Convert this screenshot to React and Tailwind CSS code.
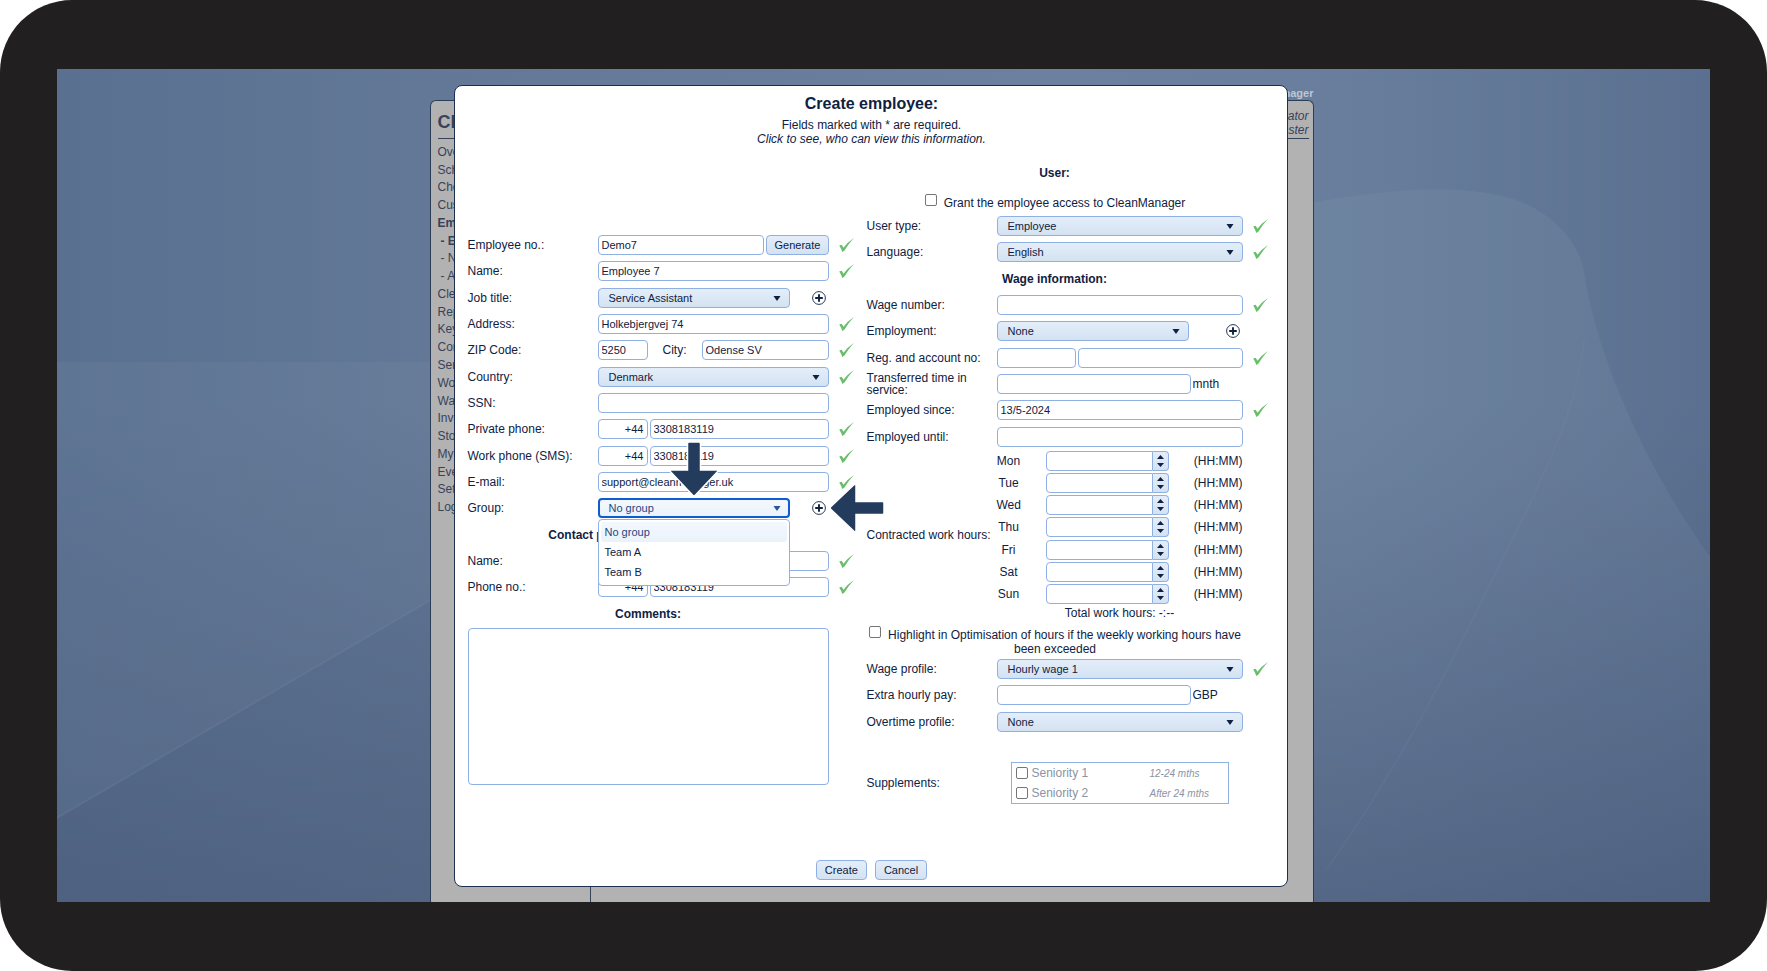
import { useState } from 'react'

const menuItems = [
  'Overview', 'Schedule', 'Checklists', 'Customers', 'Employees', '- Employees', '- New', '- Absence',
  'Cleaning', 'Reports', 'Keys', 'Contacts', 'Services', 'Work', 'Warehouse', 'Invoices', 'Stock',
  'My page', 'Events', 'Settings', 'Log out',
]
const days = ['Mon', 'Tue', 'Wed', 'Thu', 'Fri', 'Sat', 'Sun']
const groups = ['No group', 'Team A', 'Team B']

const box = 'h-5 rounded-[4px] border border-[#8fb0e2] text-[11px] text-[#0f2142]'
const blue = 'bg-linear-to-b from-[#e4eef9] to-[#d3e2f2]'

function Check() {
  return (
    <svg viewBox="0 0 15 14" className="h-[14px] w-[15px]" aria-hidden="true">
      <path
        d="M0.2 7.5 L2.7 6.7 L4.5 9.8 Q8.5 4.2 14.9 0 Q9.6 5.6 5.5 12.6 L3.3 14 Q2.3 10.700 0.2 7.5 Z"
        fill="#69be6b"
      />
    </svg>
  )
}

function Plus({ label }) {
  return (
    <button type="button" aria-label={label} className="mr-[3px] ml-auto">
      <svg viewBox="0 0 14 14" className="size-[14px]" fill="none" stroke="#0f2142">
        <circle cx="7" cy="7" r="6.4" strokeWidth="0.9" />
        <path d="M7 3.2v7.6M3.2 7h7.6" strokeWidth="1.900" />
      </svg>
    </button>
  )
}

function Input({ className = 'w-full', ...props }) {
  return <input type="text" className={`${box} min-w-0 bg-white px-[3px] outline-none ${className}`} {...props} />
}

function Select({ id, value, className = 'w-full', active, options = [value] }) {
  return (
    <div className={`relative flex ${className}`}>
      <select
        id={id}
        defaultValue={value}
        className={
          active
            ? 'h-5 w-full appearance-none rounded-[4px] border-2 border-[#0f5bd0] bg-linear-to-b from-[#f4f8fd] to-[#eaf2fb] pl-[9px] text-[11px] text-[#24477f] outline-none'
            : `${box} ${blue} w-full appearance-none pl-[10px] outline-none`
        }
      >
        {options.map(o => <option key={o}>{o}</option>)}
      </select>
      <svg viewBox="0 0 8 5" className="pointer-events-none absolute top-2 right-[9px] h-[5px] w-2" aria-hidden="true">
        <path d="M0.5 0h7L4.6 4.3q-.6.7-1.2 0z" fill={active ? '#2f5597' : '#0f2142'} />
      </svg>
    </div>
  )
}

function Row({ id, label, ok, children }) {
  return (
    <div className="flex items-center">
      <label htmlFor={id} className="w-[130px] shrink-0 pr-2 leading-3">{label}</label>
      <div className="relative flex min-w-0 flex-1 items-center gap-[2px]">{children}</div>
      <div className="w-[26px] shrink-0 pl-[10px]">{ok && <Check />}</div>
    </div>
  )
}

function Heading({ children }) {
  return <h2 className="self-center pr-[26px] text-center font-bold">{children}</h2>
}

function Button({ children, className = '' }) {
  return (
    <button type="button" className={`${box} ${blue} px-2 ${className}`}>
      {children}
    </button>
  )
}

function Wallpaper() {
  return (
    <svg viewBox="0 0 1653 833" preserveAspectRatio="none" className="absolute inset-0 size-full" aria-hidden="true">
      <defs>
        <linearGradient id="sky" x1="0" x2="1" y1="0" y2="0">
          <stop offset="0" stopColor="#5a7091" />
          <stop offset=".22" stopColor="#627896" />
          <stop offset=".6" stopColor="#6b819f" />
          <stop offset=".78" stopColor="#687e9c" />
          <stop offset="1" stopColor="#5b7090" />
        </linearGradient>
        <linearGradient id="shade" x1="0" x2="0" y1="0" y2="1">
          <stop offset=".4" stopColor="#465776" stopOpacity="0" />
          <stop offset="1" stopColor="#465776" stopOpacity=".6" />
        </linearGradient>
        <linearGradient id="glow" x1="0" x2="0" y1="0" y2="1">
          <stop offset="0" stopColor="#869db0" stopOpacity=".16" />
          <stop offset=".4" stopColor="#869db0" stopOpacity=".16" />
          <stop offset="1" stopColor="#869db0" stopOpacity="0" />
        </linearGradient>
      </defs>
      <rect width="1653" height="833" fill="url(#sky)" />
      <rect width="1653" height="833" fill="url(#shade)" />
      <path d="M0 293 H420 V504 L0 749 Z" fill="#7d94a8" fillOpacity=".14" />
      <path d="M0 749 L420 504" fill="none" stroke="#8ba0b8" strokeOpacity=".14" strokeWidth="2" />
      <path d="M1200 145 Q1376 105 1456 130 C1500 145 1522 176 1527 203 C1540 290 1590 400 1653 488 V833 H1200 Z" fill="url(#glow)" />
      <path d="M1527 270 C1520 350 1480 420 1413 556 C1380 620 1340 700 1270 800" fill="none" stroke="#8ba0b8" strokeOpacity=".09" strokeWidth="2" />
    </svg>
  )
}

function Background() {
  return (
    <div className="relative mx-auto flex h-full w-full max-w-[884px] flex-col text-[12px] text-[#36425a]">
      <p className="flex h-[31px] items-end justify-end text-[11px] leading-[14px] font-bold text-[#bfc6d0]">CleanManager</p>
      <div className="flex flex-1 flex-col rounded-t-[6px] border border-b-0 border-[#2c3d57] bg-[#b2b2b2] pr-1 pl-[7px]">
        <header className="flex h-[38px] items-center justify-between border-b border-[#36425a] pt-[6px]">
          <span className="text-[18px] font-bold">CleanManager</span>
          <span className="text-right leading-[14px] italic">Administrator<br />Cleanmaster</span>
        </header>
        <nav className="w-[153px] flex-1 border-r border-[#36425a] pt-1 leading-4">
          <ul className="grid min-h-[373px] auto-rows-fr">
            {menuItems.map((item, i) => (
              <li key={item} className={`flex items-center ${i === 4 || i === 5 ? 'font-bold' : ''}`}>
                <a href="#" className={item.startsWith('-') ? 'pl-[3px]' : ''}>{item}</a>
              </li>
            ))}
          </ul>
        </nav>
      </div>
    </div>
  )
}

function GroupField() {
  const [selected, setSelected] = useState('No group')
  return (
    <>
      <Select id="group" value="No group" options={groups} className="w-[192px]" active />
      <Plus label="Add group" />
      <ul className="absolute top-[21px] left-0 z-10 w-[192px] rounded-[4px] border border-[#8fb0e2] bg-white px-[2px] pt-[2px] pb-[3px]">
        {groups.map(g => (
          <li key={g}>
            <button
              type="button"
              onClick={() => setSelected(g)}
              className={`h-5 w-full rounded-[3px] px-1 text-left text-[11px] ${g === selected ? 'bg-linear-to-b from-[#f3f8fd] to-[#eaf2fb] text-[#24477f]' : ''}`}
            >
              {g}
            </button>
          </li>
        ))}
      </ul>
      <svg viewBox="0 0 52 58" className="absolute bottom-5 left-[70px] z-20 h-[58px] w-[52px]" aria-hidden="true">
        <path
          d="M21 2h10q1.500 0 1.500 1.500V30h15.500q3 0 1 2.300L27.500 55q-1.500 1.700-3 0L3 32.300Q1 30 4 30H19.500V3.500Q19.500 2 21 2Z"
          fill="#233b5c" stroke="#fff" strokeWidth="1.500"
        />
      </svg>
      <svg viewBox="0 0 58 52" className="absolute -right-[57px] z-20 h-[52px] w-[58px]" aria-hidden="true">
        <path
          d="M56 21v10q0 1.500-1.500 1.500H28v15.500q0 3-2.300 1L3 27.500q-1.700-1.500 0-3L25.700 3Q28 1 28 4V19.500H54.500Q56 19.500 56 21Z"
          fill="#233b5c" stroke="#fff" strokeWidth="1.500"
        />
      </svg>
    </>
  )
}

function Phone({ id, label }) {
  return (
    <Row id={id} label={label} ok>
      <Input className="w-[50px] text-right" defaultValue="+44" aria-label={`${label} country code`} />
      <Input id={id} className="flex-1" defaultValue="3308183119" />
    </Row>
  )
}

function EmployeeColumn() {
  return (
    <section className="flex-[387] pt-[86px]">
      <div className="grid min-h-[395px] auto-rows-fr">
        <Row id="no" label="Employee no.:" ok>
          <Input id="no" className="flex-1" defaultValue="Demo7" />
          <Button className="w-[63px]">Generate</Button>
        </Row>
        <Row id="name" label="Name:" ok><Input id="name" defaultValue="Employee 7" /></Row>
        <Row id="job" label="Job title:">
          <Select id="job" value="Service Assistant" className="w-[192px]" />
          <Plus label="Add job title" />
        </Row>
        <Row id="address" label="Address:" ok><Input id="address" defaultValue="Holkebjergvej 74" /></Row>
        <Row id="zip" label="ZIP Code:" ok>
          <Input id="zip" className="w-[50px]" defaultValue="5250" />
          <label htmlFor="city" className="flex-1 text-center">City:</label>
          <Input id="city" className="w-[127px]" defaultValue="Odense SV" />
        </Row>
        <Row id="country" label="Country:" ok><Select id="country" value="Denmark" /></Row>
        <Row id="ssn" label="SSN:"><Input id="ssn" /></Row>
        <Phone id="private" label="Private phone:" />
        <Phone id="work" label="Work phone (SMS):" />
        <Row id="email" label="E-mail:" ok><Input id="email" defaultValue="support@cleanmanager.uk" /></Row>
        <Row id="group" label="Group:"><GroupField /></Row>
        <Heading>Contact person during emergency:</Heading>
        <Row id="contact" label="Name:" ok><Input id="contact" /></Row>
        <Phone id="contact-phone" label="Phone no.:" />
        <Heading>Comments:</Heading>
      </div>
      <div className="pr-[26px]">
        <textarea aria-label="Comments" className="mt-px block h-[157px] w-full resize-none rounded-[4px] border border-[#8fb0e2] bg-white outline-none" />
      </div>
    </section>
  )
}

function TimeInput({ id }) {
  return (
    <div className="flex">
      <Input id={id} className="w-[107px] rounded-r-none" />
      <div className={`${box} ${blue} flex w-[16px] flex-col items-center justify-center gap-1 rounded-l-none border-l-0`}>
        <button type="button" aria-label="Increase">
          <svg viewBox="0 0 7 4" className="h-1 w-[7px]"><path d="M0 4L3.500 0L7 4Z" fill="#0f2142" /></svg>
        </button>
        <button type="button" aria-label="Decrease">
          <svg viewBox="0 0 7 4" className="h-1 w-[7px]"><path d="M0 0L3.500 4L7 0Z" fill="#0f2142" /></svg>
        </button>
      </div>
    </div>
  )
}

function CheckLine({ children }) {
  return (
    <label className="block pr-[25px] text-center leading-[14px]">
      <input type="checkbox" className="mr-[7px] size-3 appearance-none rounded-[2px] border border-[#767676] bg-white align-[1px]" />
      {children}
    </label>
  )
}

function Supplement({ name, period }) {
  return (
    <label className="flex h-5 items-center text-[#8b93a3]">
      <input type="checkbox" className="mr-1 size-3 appearance-none rounded-[2px] border border-[#767676] bg-white" />
      <span className="w-[118px]">{name}</span>
      <span className="text-[10px] italic">{period}</span>
    </label>
  )
}

function WageColumn() {
  return (
    <section className="flex-[402] pt-[14px]">
      <div className="grid h-[26px]"><Heading>User:</Heading></div>
      <div className="h-[27px] pt-2">
        <CheckLine>Grant the employee access to CleanManager</CheckLine>
      </div>
      <div className="grid min-h-[237px] auto-rows-fr">
        <Row id="type" label="User type:" ok><Select id="type" value="Employee" /></Row>
        <Row id="language" label="Language:" ok><Select id="language" value="English" /></Row>
        <Heading>Wage information:</Heading>
        <Row id="wage-no" label="Wage number:" ok><Input id="wage-no" /></Row>
        <Row id="employment" label="Employment:">
          <Select id="employment" value="None" className="w-[192px]" />
          <Plus label="Add employment" />
        </Row>
        <Row id="reg" label="Reg. and account no:" ok>
          <Input id="reg" className="w-[79px]" />
          <Input aria-label="Account no" className="flex-1" />
        </Row>
        <Row id="transferred" label="Transferred time in service:">
          <Input id="transferred" className="w-[194px]" /><span>mnth</span>
        </Row>
        <Row id="since" label="Employed since:" ok><Input id="since" defaultValue="13/5-2024" /></Row>
        <Row id="until" label="Employed until:"><Input id="until" /></Row>
      </div>
      <div className="flex items-center pr-[26px]">
        <span className="w-[130px] shrink-0">Contracted work hours:</span>
        <div className="flex-1">
          <div className="grid min-h-[155px] auto-rows-fr">
            {days.map(day => (
              <div key={day} className="flex items-center justify-between">
                <div className="flex items-center">
                  <label htmlFor={day} className="mr-[25px] w-6 text-center">{day}</label>
                  <TimeInput id={day} />
                </div>
                <span>(HH:MM)</span>
              </div>
            ))}
          </div>
          <p className="pt-px text-center leading-[14px]">Total work hours: -:--</p>
        </div>
      </div>
      <div className="h-9 pt-[6px]">
        <CheckLine>Highlight in Optimisation of hours if the weekly working hours have been exceeded</CheckLine>
      </div>
      <div className="grid min-h-[79px] auto-rows-fr">
        <Row id="profile" label="Wage profile:" ok><Select id="profile" value="Hourly wage 1" /></Row>
        <Row id="extra" label="Extra hourly pay:">
          <Input id="extra" className="w-[194px]" /><span>GBP</span>
        </Row>
        <Row id="overtime" label="Overtime profile:"><Select id="overtime" value="None" /></Row>
      </div>
      <div className="mt-[27px] flex items-center pr-[26px]">
        <span className="w-[130px] shrink-0">Supplements:</span>
        <div className="mx-[14px] flex-1 border border-[#8fb0e2] pl-1">
          <Supplement name="Seniority 1" period="12-24 mths" />
          <Supplement name="Seniority 2" period="After 24 mths" />
        </div>
      </div>
    </section>
  )
}

export default function App() {
  return (
    <div className="flex min-h-screen flex-col rounded-[72px] bg-[#221f20] px-[57px] py-[69px] font-['Liberation_Sans',Arial,sans-serif]">
      <main className="relative grid flex-1 overflow-hidden pr-[26px]">
        <Wallpaper />
        <div className="col-start-1 row-start-1 pl-[2px]"><Background /></div>
        <form className="relative col-start-1 row-start-1 mx-auto mt-4 mb-[14px] w-full max-w-[834px] self-start rounded-[8px] border border-[#1c2f4f] bg-white pt-2 pr-[18px] pb-[6px] pl-[13px] text-[12px] text-[#0f2142]">
          <header className="pl-[7px] text-center leading-[14px]">
            <h1 className="mb-1 text-[16px] leading-5 font-bold">Create employee:</h1>
            <p>Fields marked with * are required.</p>
            <p className="italic">Click to see, who can view this information.</p>
          </header>
          <div className="flex gap-[12px]">
            <EmployeeColumn />
            <WageColumn />
          </div>
          <footer className="mt-14 flex justify-center gap-2 pl-[7px]">
            <Button>Create</Button>
            <Button>Cancel</Button>
          </footer>
        </form>
      </main>
    </div>
  )
}
